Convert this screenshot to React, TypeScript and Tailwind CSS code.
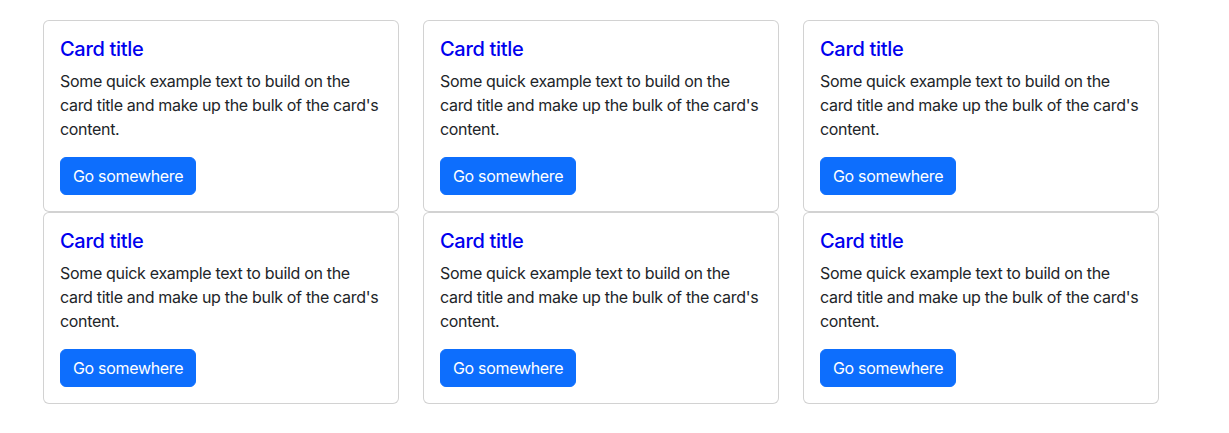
import React from 'react';

const cards = [1, 2, 3, 4, 5, 6];

function Card() {
  return (
    <div className="flex flex-col rounded-md border border-black/[0.175] bg-white p-4">
      <h5 className="mb-2 text-[20px] font-medium leading-[1.2] text-[#0000ee]">Card title</h5>
      <p className="mb-4 text-base leading-6 text-[#212529]">
        Some quick example text to build on the card title and make up the bulk of the card's content.
      </p>
      <div>
        <a
          href="#"
          className="inline-block rounded-md border border-[#0d6efd] bg-[#0d6efd] px-3 py-1.5 text-base leading-6 text-white"
        >
          Go somewhere
        </a>
      </div>
    </div>
  );
}

export default function App() {
  return (
    <div className="min-h-screen bg-white pt-5 pl-[43px] font-['Inter',sans-serif] tracking-[-0.02em]">
      <div className="grid grid-cols-[356px_356px_356px] gap-x-6">
        {cards.map((c) => (
          <Card key={c} />
        ))}
      </div>
    </div>
  );
}
